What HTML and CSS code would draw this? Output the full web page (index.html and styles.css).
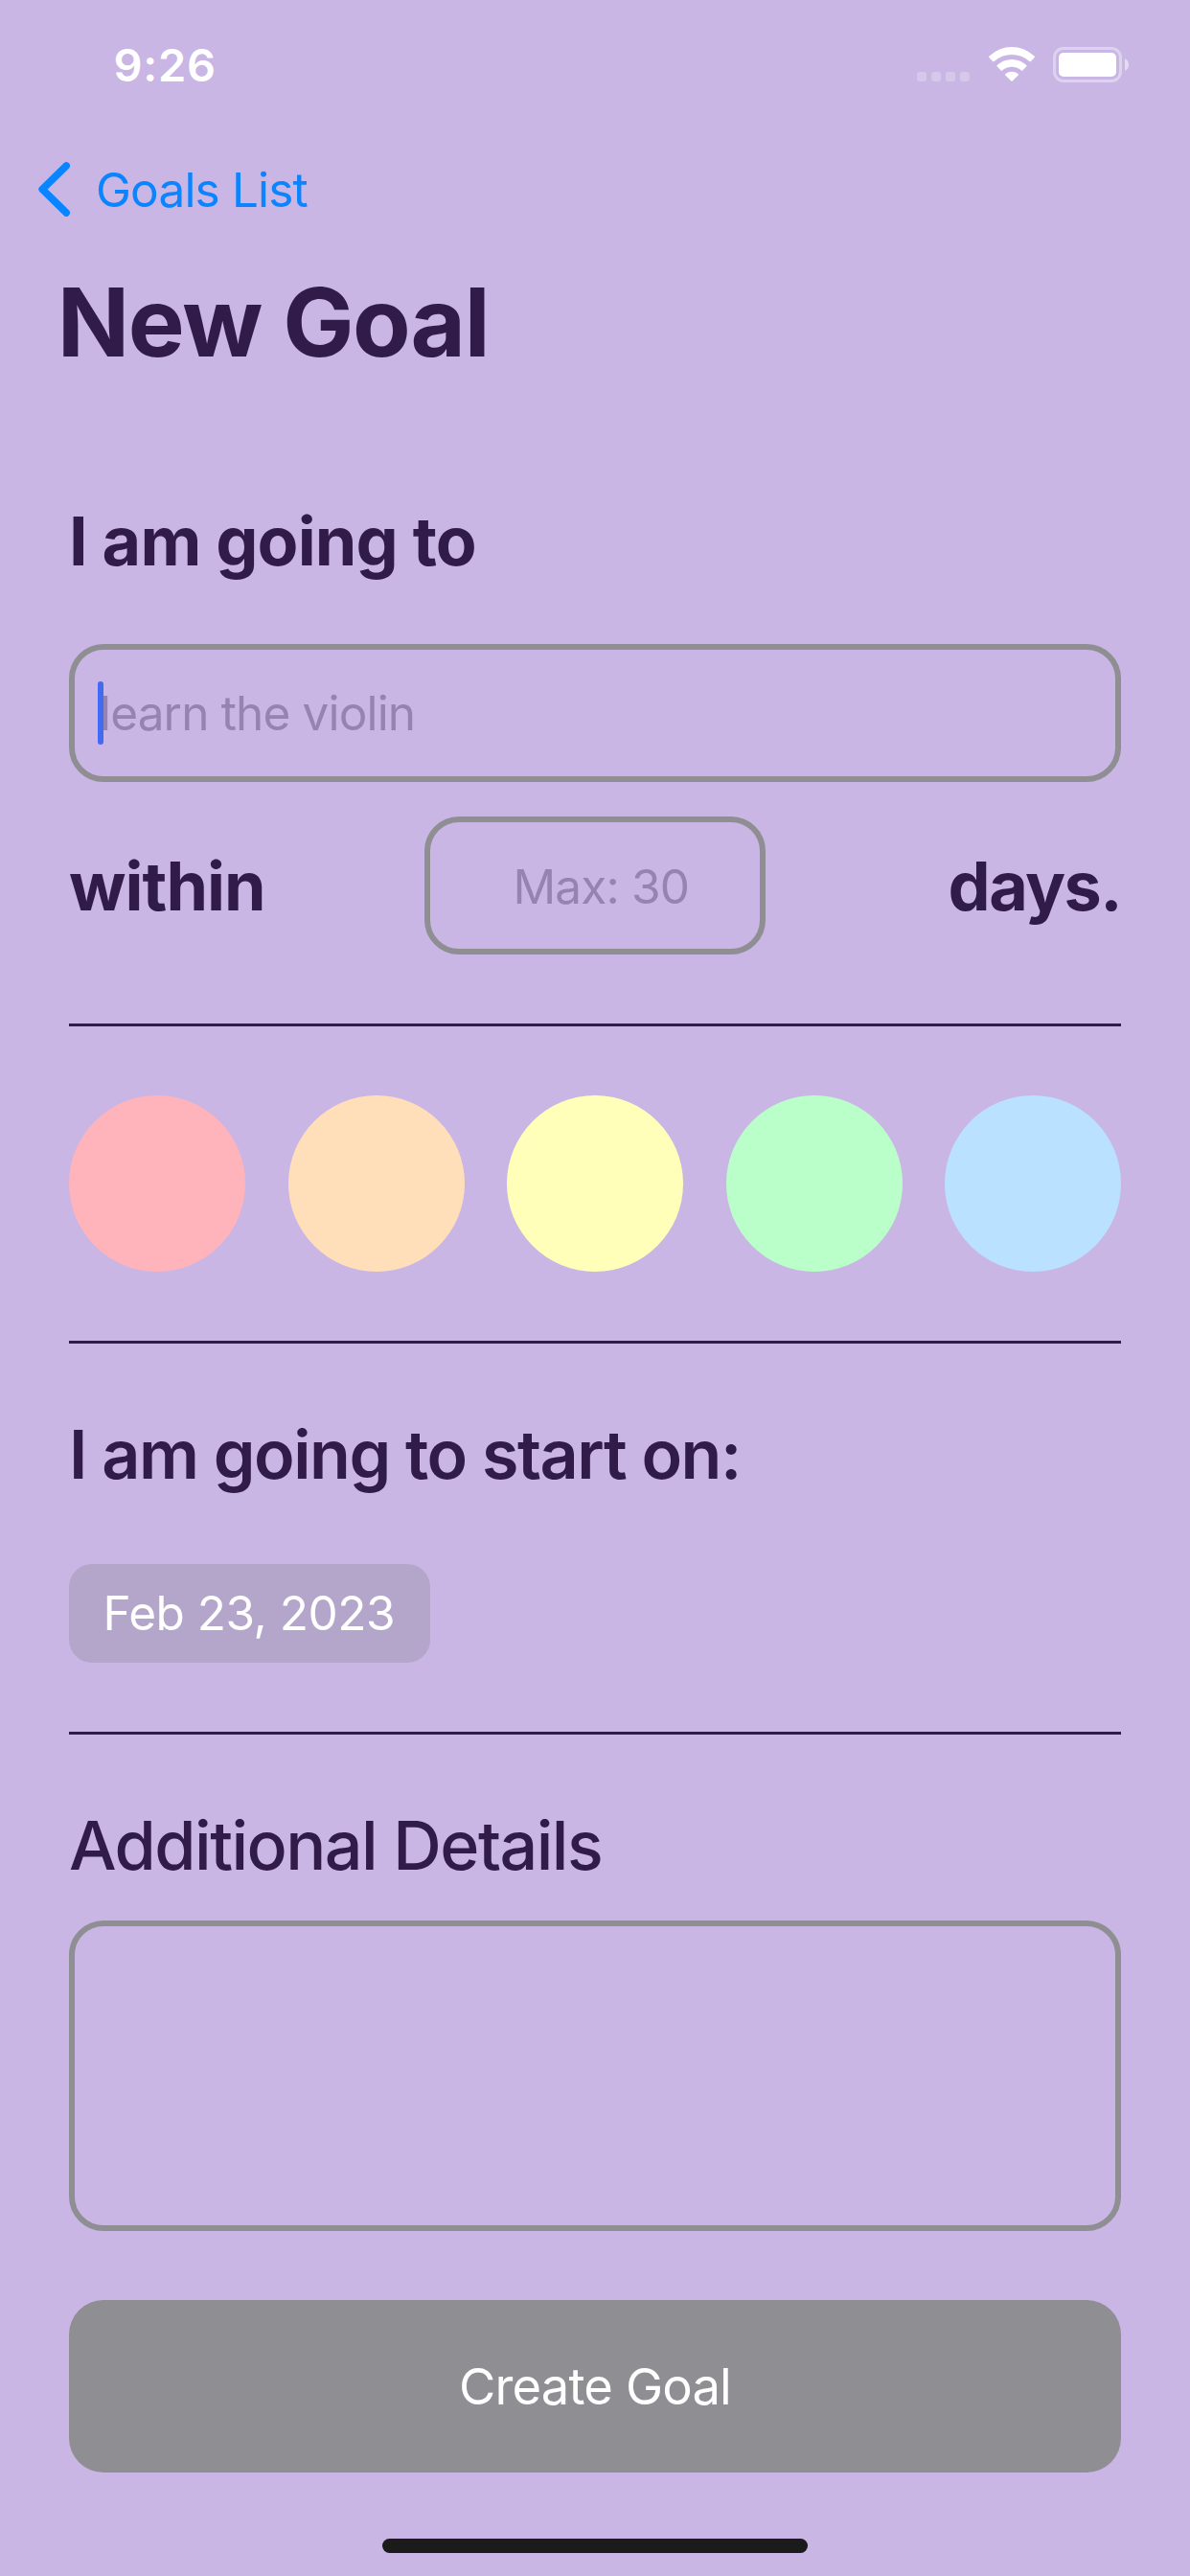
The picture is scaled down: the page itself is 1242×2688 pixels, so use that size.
FILE: index.html
```html
<!DOCTYPE html>
<html lang="en">
<head>
  <meta charset="utf-8">
  <meta name="viewport" content="width=device-width">
  <title>New Goal</title>
  <link rel="stylesheet" href="styles.css">
</head>
<body>
  <div class="screen">
    <header class="status-bar">
      <span class="time">9:26</span>
      <div class="indicators">
        <svg class="signal" width="55" height="36" viewBox="0 0 55 36" fill="#fff" fill-opacity=".25">
          <rect x="0" y="26" width="10" height="10" rx="3"/>
          <rect x="15" y="26" width="10" height="10" rx="3"/>
          <rect x="30" y="26" width="10" height="10" rx="3"/>
          <rect x="45" y="26" width="10" height="10" rx="3"/>
        </svg>
        <svg class="wifi" width="48" height="36" viewBox="0 0 48 36" fill="#fff">
          <path d="M.5 11.2Q-.3 10.3.5 9.5A34 34 0 0 1 47.5 9.5Q48.300 10.300 47.500 11.200L43.900 15Q43.200 15.700 42.400 15A27.500 27.500 0 0 0 5.600 15Q4.800 15.700 4.100 15Z"/>
          <path d="M8.600 20.300Q8 19.600 8.700 19A22.500 22.500 0 0 1 39.300 19Q40 19.600 39.400 20.300L35.300 24.600Q34.600 25.200 33.900 24.600A15 15 0 0 0 14.100 24.600Q13.400 25.200 12.700 24.600Z"/>
          <path d="M17.300 29.400Q16.700 28.700 17.400 28.100A10.500 10.500 0 0 1 30.600 28.100Q31.300 28.700 30.700 29.400L24.600 35.600Q24 36.200 23.400 35.600Z"/>
        </svg>
        <svg class="battery" width="79" height="37" viewBox="0 0 79 37">
          <rect x="1.500" y="1.500" width="69" height="34" rx="9.500" fill="none" stroke="#fff" stroke-opacity=".4" stroke-width="3"/>
          <rect x="6" y="6" width="60" height="25" rx="5" fill="#fff"/>
          <path d="M75 12Q79 14 79 18.500T75 25Z" fill="#fff" fill-opacity=".5"/>
        </svg>
      </div>
    </header>

    <nav class="nav">
      <svg class="chevron" width="33" height="57" viewBox="0 0 33 57" fill="none" stroke="#0a84ff" stroke-width="7.600" stroke-linecap="round" stroke-linejoin="round">
        <path d="M29.200 4 4.200 28.500 29.200 53"/>
      </svg>
      <a class="back">Goals List</a>
    </nav>

    <h1 class="title">New Goal</h1>

    <main class="form">
      <h2 class="heading intro">I am going to</h2>
      <div class="field goal-field">
        <span class="placeholder">learn the violin</span>
        <span class="caret"></span>
      </div>
      <div class="within-row">
        <span class="heading within">within</span>
        <div class="field days-field"><span class="placeholder">Max: 30</span></div>
        <span class="heading days">days.</span>
      </div>
      <hr class="divider">
      <div class="swatches">
        <span class="swatch pink"></span>
        <span class="swatch orange"></span>
        <span class="swatch yellow"></span>
        <span class="swatch green"></span>
        <span class="swatch blue"></span>
      </div>
      <hr class="divider">
      <h2 class="heading start">I am going to start on:</h2>
      <div class="date">Feb 23, 2023</div>
      <hr class="divider">
      <h2 class="heading details">Additional Details</h2>
      <div class="textarea"></div>
      <button class="create" type="button">Create Goal</button>
    </main>
    <div class="home-indicator"></div>
  </div>
</body>
</html>
```
FILE: styles.css
```css
* {
  box-sizing: border-box;
}

body {
  margin: 0;
  background: #c9b6e4;
  color: #301b49;
  font-family: Inter, "Liberation Sans", sans-serif;
}

.screen {
  display: flex;
  flex-direction: column;
  width: 1242px;
  height: 2688px;
  overflow: hidden;
}

.status-bar {
  display: flex;
  justify-content: space-between;
  align-items: center;
  height: 135px;
  padding: 0 64px 0 118.5px;
}

.time {
  color: #fff;
  font-size: 47px;
  font-weight: 600;
  line-height: 57px;
  letter-spacing: 0.72px;
}

.indicators {
  display: flex;
  align-items: flex-start;
  height: 37px;
}

.wifi {
  margin-left: 20px;
}

.battery {
  margin-left: 19px;
}

.nav {
  display: flex;
  align-items: center;
  gap: 27px;
  height: 125px;
  padding-left: 40px;
  color: #0a84ff;
  font-size: 49.5px;
  letter-spacing: -0.83px;
}

.title {
  margin: 0 0 110px;
  padding-left: 59.7px;
  font-size: 99px;
  font-weight: 700;
  line-height: 153px;
  letter-spacing: -1.31px;
}

.form {
  display: flex;
  flex-direction: column;
  padding: 0 72px;
}

.heading {
  margin: 0;
  font-size: 70px;
  font-weight: 700;
  line-height: 84px;
  white-space: nowrap;
}

.intro {
  margin-bottom: 65px;
  letter-spacing: -0.83px;
}

.field {
  display: flex;
  align-items: center;
  height: 144px;
  border: 6px solid #8e8e93;
  border-radius: 36px;
}

.goal-field {
  position: relative;
  padding-left: 26px;
}

.placeholder {
  color: #9783b3;
  font-size: 49.5px;
  letter-spacing: -0.84px;
}

.caret {
  position: absolute;
  left: 24px;
  top: 33px;
  width: 6px;
  height: 66px;
  border-radius: 3px;
  background: #426bf2;
}

.within-row {
  display: grid;
  grid-template-columns: 1fr 356px 1fr;
  align-items: center;
  margin: 36px 0 72px;
}

.within {
  padding-top: 2px;
  letter-spacing: -0.95px;
}

.days-field {
  padding: 2px 0 0 86.4px;
}

.days {
  justify-self: end;
  padding-top: 2px;
  letter-spacing: -1.58px;
}

.divider {
  width: 100%;
  height: 3px;
  margin: 0;
  border: 0;
  background: #301b49;
}

.swatches {
  display: flex;
  justify-content: space-between;
  margin: 72px 0;
}

.swatch {
  width: 184px;
  height: 184px;
  border-radius: 50%;
}

.pink {
  background: #ffb3ba;
}

.orange {
  background: #ffdfba;
}

.yellow {
  background: #ffffba;
}

.green {
  background: #baffc9;
}

.blue {
  background: #bae1ff;
}

.start {
  margin: 74px 0 72px;
  font-weight: 600;
  letter-spacing: -1.44px;
}

.date {
  align-self: flex-start;
  width: 377px;
  height: 103px;
  margin-bottom: 72px;
  padding-left: 35.4px;
  border-radius: 24px;
  background: #b4a6cb;
  color: #fff;
  font-size: 49.5px;
  line-height: 103px;
  letter-spacing: -0.47px;
}

.details {
  margin: 74px 0 36px;
  font-weight: 500;
  letter-spacing: -1.53px;
}

.textarea {
  height: 324px;
  border: 6px solid #8e8e93;
  border-radius: 36px;
}

.create {
  height: 180px;
  margin-top: 72px;
  padding: 0;
  border: 0;
  border-radius: 36px;
  background: #8e8e93;
  color: #fff;
  font: 400 52.5px Inter, "Liberation Sans", sans-serif;
  letter-spacing: -0.85px;
}

.home-indicator {
  align-self: center;
  width: 444px;
  height: 15px;
  margin-top: 69px;
  border-radius: 8px;
  background: #1b1b1b;
}
```
